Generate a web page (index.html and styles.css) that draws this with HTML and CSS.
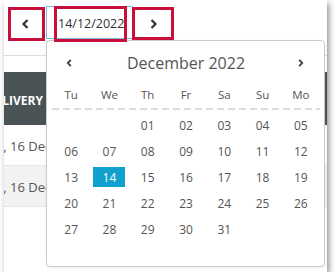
FILE: index.html
```html
<!DOCTYPE html>
<html lang="en">
<head>
    <meta charset="UTF-8">
    <title>Date Navigation</title>
    <link rel="stylesheet" href="styles.css">
</head>
<body>
<div class="shot">
    <div class="toolbar">
        <button class="nav-btn" type="button">
            <svg width="8" height="10" viewBox="0 0 8 10"><path d="M6.5 1 L2.5 5 L6.5 9" fill="none" stroke="#333" stroke-width="2.2"/></svg>
        </button>
        <div class="date-input">14/12/2022</div>
        <button class="nav-btn" type="button">
            <svg width="8" height="10" viewBox="0 0 8 10"><path d="M1.5 1 L5.5 5 L1.5 9" fill="none" stroke="#333" stroke-width="2.2"/></svg>
        </button>
    </div>

    <div class="grid-table">
        <div class="grid-head"><span class="head-cell">DELIVERY</span></div>
        <div class="grid-row"><span class="row-cell">Fri, 16 Dec 2022</span></div>
        <div class="grid-row alt"><span class="row-cell">Fri, 16 Dec 2022</span></div>
    </div>

    <div class="calendar">
        <div class="cal-head">
            <span class="cal-nav">
                <svg width="6" height="8" viewBox="0 0 6 8"><path d="M4.8 0.8 L1.8 4 L4.8 7.2" fill="none" stroke="#444" stroke-width="1.9"/></svg>
            </span>
            <span class="cal-title">December 2022</span>
            <span class="cal-nav">
                <svg width="6" height="8" viewBox="0 0 6 8"><path d="M1.2 0.8 L4.2 4 L1.2 7.2" fill="none" stroke="#444" stroke-width="1.9"/></svg>
            </span>
        </div>
        <div class="cal-weekdays">
            <span>Tu</span><span>We</span><span>Th</span><span>Fr</span><span>Sa</span><span>Su</span><span>Mo</span>
        </div>
        <div class="cal-days">
            <span></span><span></span><span>01</span><span>02</span><span>03</span><span>04</span><span>05</span>
            <span>06</span><span>07</span><span>08</span><span>09</span><span>10</span><span>11</span><span>12</span>
            <span>13</span><span class="selected"><b>14</b></span><span>15</span><span>16</span><span>17</span><span>18</span><span>19</span>
            <span>20</span><span>21</span><span>22</span><span>23</span><span>24</span><span>25</span><span>26</span>
            <span>27</span><span>28</span><span>29</span><span>30</span><span>31</span><span></span><span></span>
        </div>
    </div>

    <span class="mark mark-prev"></span>
    <span class="mark mark-input"></span>
    <span class="mark mark-next"></span>
</div>
</body>
</html>
```

FILE: styles.css
```css
body {
    margin: 0;
    background: #fff;
    font-family: "Open Sans", Arial, sans-serif;
    color: #555;
}
.shot {
    position: relative;
    margin-left: 4px;
    width: 323px;
    height: 272px;
    background: #fff;
    overflow: hidden;
    box-shadow: 2px 3px 6px rgba(0, 0, 0, 0.45);
}
.toolbar {
    display: flex;
    align-items: flex-start;
    box-sizing: border-box;
    height: 56px;
    padding-top: 6px;
    border-bottom: 1px solid #ddd;
}
.nav-btn {
    width: 42px;
    height: 33px;
    padding: 0;
    border: none;
    background: none;
    display: flex;
    align-items: center;
    justify-content: center;
}
.nav-btn svg {
    margin-top: 3px;
}
.date-input {
    box-sizing: border-box;
    width: 87px;
    height: 33px;
    padding-left: 11px;
    border: 1px solid #7fb8e0;
    font-size: 12.5px;
    line-height: 33px;
    color: #333;
}
.grid-table {
    margin-top: 16px;
}
.grid-head {
    height: 53px;
    background: #4a5356;
    display: flex;
    align-items: center;
}
.head-cell {
    display: flex;
    justify-content: flex-end;
    width: 39px;
    overflow: hidden;
    padding-top: 4px;
    color: #fff;
    font-size: 12px;
    font-weight: 700;
    white-space: nowrap;
}
.grid-row {
    height: 40px;
    border-bottom: 1px solid #e6e6e6;
    display: flex;
    align-items: center;
    font-size: 13px;
    white-space: nowrap;
}
.grid-row.alt {
    background: #f2f2f2;
}
.row-cell {
    margin-left: -16px;
    padding-top: 1px;
}
.calendar {
    position: absolute;
    left: 42px;
    top: 40px;
    box-sizing: border-box;
    width: 279px;
    height: 227px;
    padding: 0 4px 0 5px;
    background: #fff;
    border: 1px solid #ccc;
    border-radius: 4px;
    box-shadow: 0 1px 3px rgba(0, 0, 0, 0.08);
}
.cal-head {
    display: grid;
    grid-template-columns: 1fr 5fr 1fr;
    align-items: center;
    height: 44px;
}
.cal-nav {
    display: flex;
    justify-content: center;
}
.cal-nav:first-child svg {
    margin-right: 4px;
}
.cal-title {
    text-align: center;
    font-size: 16px;
    color: #555;
}
.cal-weekdays {
    display: grid;
    grid-template-columns: repeat(7, 1fr);
    padding-bottom: 5px;
    font-size: 11.5px;
    line-height: 20px;
    text-align: center;
    background: repeating-linear-gradient(90deg, #ddd 0 7px, transparent 7px 11px) left bottom / 100% 2px no-repeat;
}
.cal-days {
    display: grid;
    grid-template-columns: repeat(7, 1fr);
    grid-auto-rows: 26px;
    margin-top: 2px;
    font-size: 12px;
    text-align: center;
}
.cal-days span {
    display: flex;
    align-items: center;
    justify-content: center;
}
.cal-days .selected b {
    display: flex;
    align-items: center;
    justify-content: center;
    width: 32px;
    height: 20px;
    background: #0fa0ce;
    color: #fff;
    font-weight: 400;
}
.mark {
    position: absolute;
    box-sizing: border-box;
    border: 3px solid #c9103a;
}
.mark-prev {
    left: 4px;
    top: 7px;
    width: 37px;
    height: 34px;
}
.mark-input {
    left: 50px;
    top: 6px;
    width: 73px;
    height: 36px;
}
.mark-next {
    left: 128px;
    top: 7px;
    width: 42px;
    height: 33px;
}
```
